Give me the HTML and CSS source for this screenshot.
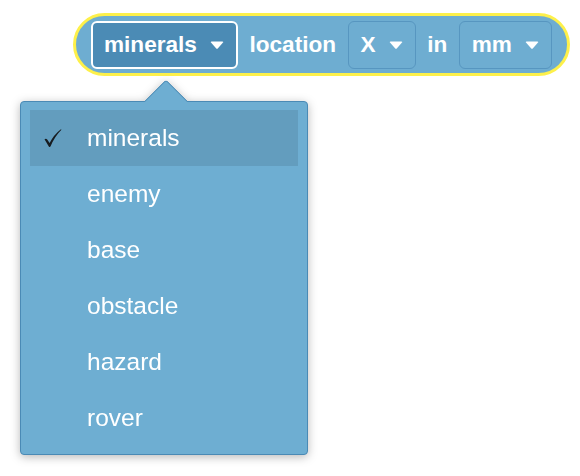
FILE: index.html
```html
<!DOCTYPE html>
<html>
<head>
<meta charset="utf-8">
<link rel="stylesheet" href="styles.css">
</head>
<body>
<div class="block">
  <div class="dd dd-active">
    <span class="dd-label">minerals</span>
    <svg class="caret" width="14" height="8" viewBox="0 0 14 8"><path d="M1.5 0.5 H12.5 Q13.8 0.5 13 1.6 L8 7.2 Q7 8.2 6 7.2 L1 1.6 Q0.2 0.5 1.5 0.5 Z" fill="#fff"/></svg>
  </div>
  <span class="word">location</span>
  <div class="dd">
    <span class="dd-label">X</span>
    <svg class="caret" width="14" height="8" viewBox="0 0 14 8"><path d="M1.5 0.5 H12.5 Q13.8 0.5 13 1.6 L8 7.2 Q7 8.2 6 7.2 L1 1.6 Q0.2 0.5 1.5 0.5 Z" fill="#fff"/></svg>
  </div>
  <span class="word">in</span>
  <div class="dd">
    <span class="dd-label">mm</span>
    <svg class="caret" width="14" height="8" viewBox="0 0 14 8"><path d="M1.5 0.5 H12.5 Q13.8 0.5 13 1.6 L8 7.2 Q7 8.2 6 7.2 L1 1.6 Q0.2 0.5 1.5 0.5 Z" fill="#fff"/></svg>
  </div>
</div>
<div class="menu">
  <div class="pointer-wrap"><div class="pointer"></div></div>
  <div class="item selected">
    <svg class="check" width="20" height="20" viewBox="0 0 20 20"><path d="M1.5 11.2 Q3 10 4.2 11.4 L6.6 15 Q10.5 7 17.6 1.4 Q18.6 0.8 18.2 1.9 Q11.5 8.5 7.6 18.2 Q6.8 19.6 5.8 18.4 Z" fill="#171c20"/></svg>
    minerals
  </div>
  <div class="item">enemy</div>
  <div class="item">base</div>
  <div class="item">obstacle</div>
  <div class="item">hazard</div>
  <div class="item">rover</div>
</div>
</body>
</html>
```
FILE: styles.css
```css
html, body {
  margin: 0;
  padding: 0;
  background: #ffffff;
  font-family: "Liberation Sans", Arial, sans-serif;
}
body {
  position: relative;
  width: 580px;
  height: 476px;
  overflow: hidden;
}
.block {
  box-sizing: border-box;
  margin-left: 73px;
  margin-top: 13px;
  width: 497px;
  height: 63px;
  border: 3px solid #fdf04a;
  border-radius: 32px;
  background: #6eadd1;
  display: flex;
  align-items: center;
  gap: 11.5px;
  padding-left: 15px;
}
.word {
  color: #ffffff;
  font-weight: bold;
  font-size: 22.6px;
}
.dd {
  box-sizing: border-box;
  height: 48px;
  display: flex;
  align-items: center;
  gap: 13px;
  padding: 0 12px 0 12px;
  border: 1px solid #5796c0;
  border-radius: 6px;
  background: #6eadd1;
}
.dd-active {
  border: 2px solid #ffffff;
  background: #4b8bb5;
  padding: 0 12px 0 11px;
}
.dd-label {
  color: #ffffff;
  font-weight: bold;
  font-size: 22.6px;
}
.caret {
  display: block;
}
.menu {
  position: absolute;
  left: 20px;
  top: 101px;
  width: 288px;
  box-sizing: border-box;
  background: #6eaed2;
  border: 1px solid #4a8ab5;
  border-radius: 4px;
  padding: 8px 9px 8px 9px;
  filter: drop-shadow(0 2px 5px rgba(0, 0, 0, 0.28));
}
.pointer-wrap {
  position: absolute;
  left: 122px;
  top: -24px;
  width: 46px;
  height: 24px;
  overflow: hidden;
}
.pointer {
  position: absolute;
  left: 7px;
  top: 7.5px;
  width: 32px;
  height: 32px;
  box-sizing: border-box;
  background: #6eaed2;
  border-top: 1px solid #4a8ab5;
  border-left: 1px solid #4a8ab5;
  border-top-left-radius: 4px;
  transform: rotate(45deg);
}
.item {
  position: relative;
  height: 56px;
  display: flex;
  align-items: center;
  padding-left: 57px;
  color: #ffffff;
  font-size: 24.5px;
}
.item.selected {
  background: #639dbe;
}
.check {
  position: absolute;
  left: 13px;
  top: 18px;
  display: block;
}
```
